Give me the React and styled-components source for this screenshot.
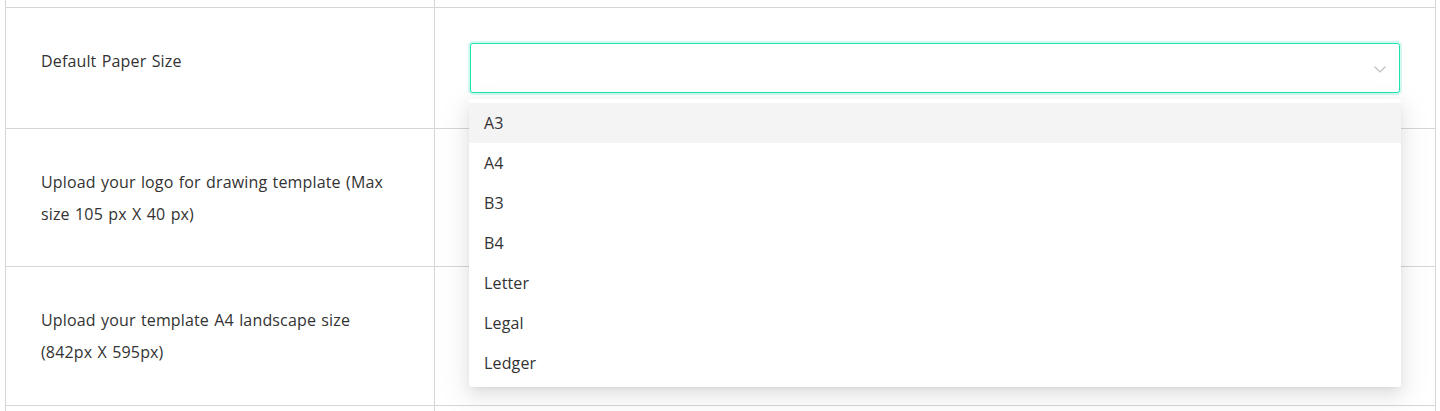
import React, { useState } from "react";
import styled, { createGlobalStyle } from "styled-components";

const GlobalStyle = createGlobalStyle`
  html, body {
    margin: 0;
    padding: 0;
    background: #fff;
    overflow: hidden;
  }
  body {
    font-family: "Open Sans", "Noto Sans", sans-serif;
    color: #333;
  }
`;

const sizes = ["A3", "A4", "B3", "B4", "Letter", "Legal", "Ledger"];

const App = () => {
  const [active, setActive] = useState("A3");

  return (
    <>
      <GlobalStyle />
      <Page>
        <Table>
          <Row h={7}>
            <LabelCell />
            <FieldCell />
          </Row>
          <Row h={120}>
            <LabelCell top={37}>Default Paper Size</LabelCell>
            <FieldCell pad>
              <SelectWrap>
                <SelectBox>
                  <Chevron viewBox="0 0 12 7">
                    <polyline points="0.5,0.5 6,6 11.5,0.5" />
                  </Chevron>
                </SelectBox>
                <Dropdown>
                  {sizes.map((s) => (
                    <Option
                      key={s}
                      active={s === active}
                      onMouseEnter={() => setActive(s)}
                    >
                      {s}
                    </Option>
                  ))}
                </Dropdown>
              </SelectWrap>
            </FieldCell>
          </Row>
          <Row h={137}>
            <LabelCell top={37}>
              Upload your logo for drawing template (Max size 105 px X 40 px)
            </LabelCell>
            <FieldCell />
          </Row>
          <Row h={138}>
            <LabelCell top={37}>
              Upload your template A4 landscape size (842px X 595px)
            </LabelCell>
            <FieldCell />
          </Row>
          <Row h={40}>
            <LabelCell />
            <FieldCell />
          </Row>
        </Table>
      </Page>
    </>
  );
};

const Page = styled.div`
  padding-left: 5px;
  height: 411px;
  overflow: hidden;
`;

const Table = styled.div`
  width: 1429px;
  border-left: 1px solid #d6d6d6;
  border-right: 1px solid #d6d6d6;
`;

const Row = styled.div`
  display: grid;
  grid-template-columns: 429px 1fr;
  height: ${(p) => p.h}px;
  border-bottom: 1px solid #d6d6d6;
`;

const LabelCell = styled.div`
  border-right: 1px solid #d6d6d6;
  padding: ${(p) => p.top || 0}px 40px 0 35px;
  font-size: 16px;
  line-height: 32px;
  letter-spacing: 0.15px;
  word-spacing: 1px;
`;

const FieldCell = styled.div`
  padding: ${(p) => (p.pad ? "35px" : "0")};
  position: relative;
`;

const SelectWrap = styled.div`
  position: relative;
`;

const SelectBox = styled.div`
  height: 50px;
  box-sizing: border-box;
  border: 1px solid #1fe2b3;
  border-radius: 3px;
  box-shadow: 0 0 0 2px rgba(31, 226, 179, 0.2);
  background: #fff;
  display: flex;
  align-items: center;
  justify-content: flex-end;
  padding-right: 13px;
`;

const Chevron = styled.svg`
  width: 12px;
  height: 7px;
  margin-top: 2px;
  fill: none;
  stroke: #bfbfbf;
  stroke-width: 1.2;
`;

const Dropdown = styled.div`
  position: absolute;
  top: 56px;
  left: -1px;
  right: -1px;
  background: #fff;
  border-radius: 3px;
  padding: 4px 0;
  box-shadow: 0 3px 6px -4px rgba(0, 0, 0, 0.12),
    0 6px 16px 0 rgba(0, 0, 0, 0.08), 0 9px 28px 8px rgba(0, 0, 0, 0.05);
  z-index: 10;
`;

const Option = styled.div`
  height: 40px;
  line-height: 40px;
  padding: 0 15px;
  font-size: 16px;
  letter-spacing: 0.15px;
  color: #333;
  background: ${(p) => (p.active ? "#f4f4f4" : "transparent")};
  cursor: pointer;
`;

export default App;
